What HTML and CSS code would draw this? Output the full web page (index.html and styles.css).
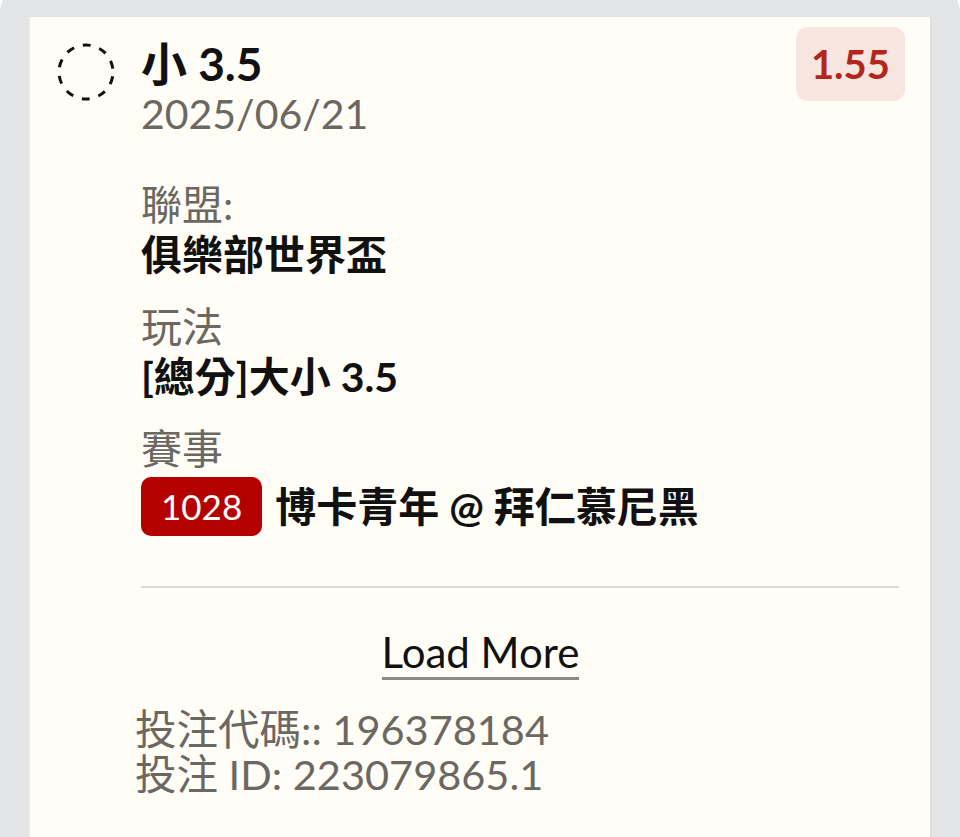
FILE: index.html
```html
<!DOCTYPE html>
<html lang="zh-Hant">
<head>
    <meta charset="UTF-8">
    <meta name="viewport" content="width=device-width, initial-scale=1.0">
    <title>投注紀錄</title>
    <link rel="stylesheet" href="styles.css">
</head>
<body>
    <div class="panel">
        <div class="card">
            <div class="bet">
                <div class="bet-icon">
                    <svg width="60" height="60" viewBox="0 0 60 60">
                        <circle cx="30" cy="30" r="27" fill="none" stroke="#111" stroke-width="3" stroke-dasharray="8 9" stroke-dashoffset="-4.5"></circle>
                    </svg>
                </div>
                <div class="bet-body">
                    <div class="bet-head">
                        <div>
                            <div class="bet-title">小 3.5</div>
                            <div class="bet-date">2025/06/21</div>
                        </div>
                        <div class="odds">1.55</div>
                    </div>

                    <div class="fields">
                        <div class="field">
                            <div class="label">聯盟:</div>
                            <div class="value">俱樂部世界盃</div>
                        </div>
                        <div class="field">
                            <div class="label">玩法</div>
                            <div class="value">[總分]大小 3.5</div>
                        </div>
                        <div class="field">
                            <div class="label">賽事</div>
                            <div class="event">
                                <span class="event-no">1028</span>
                                <span class="value">博卡青年 @ 拜仁慕尼黑</span>
                            </div>
                        </div>
                    </div>

                    <div class="divider"></div>
                </div>
            </div>

            <div class="more">
                <a class="more-link" href="#">Load More</a>
            </div>

            <div class="footer">
                <div>投注代碼:: 196378184</div>
                <div>投注 ID: 223079865.1</div>
            </div>
        </div>
    </div>
</body>
</html>
```

FILE: styles.css
```css
* { margin: 0; padding: 0; box-sizing: border-box; }
body { background: #fff; font-family: "Lato", "Noto Sans CJK TC", sans-serif; color: #111; overflow: hidden; }

.panel {
    background: #e4e5e7; border-radius: 26px 26px 0 0;
    margin-top: -14px; padding: 31px 0 0; min-height: 900px;
}
.card {
    background: #fffdf6; margin: 0 28px 0 28px; min-height: 860px;
    border-left: 2px solid #e9eae4; border-right: 2px solid #dfe0da;
    padding: 10px 25px 0 26px;
}

.bet { display: flex; }
.bet-icon { width: 60px; flex-shrink: 0; padding-top: 15px; }
.bet-icon svg { display: block; }
.bet-body { flex: 1; margin-left: 25px; }

.bet-head { display: flex; justify-content: space-between; align-items: flex-start; }
.bet-title { font-size: 46px; font-weight: 700; line-height: 50px; margin-top: 12px; }
.bet-date { font-size: 41px; line-height: 50px; color: #6b6862; }

.odds {
    background: #f6e6df; color: #b3261e; font-size: 40px; font-weight: 700;
    line-height: 52px; padding: 11px 15px; border-radius: 12px;
}

.fields { padding-top: 41px; }
.field + .field { margin-top: 22px; }
.label { font-size: 41px; line-height: 50px; color: #6b6862; }
.value { font-size: 41px; line-height: 50px; font-weight: 700; }

.event { display: flex; align-items: center; gap: 13px; margin-top: 3px; }
.event-no {
    background: #b50000; color: #fff; font-size: 35px; line-height: 42px;
    padding: 8px 20px 9px; border-radius: 10px;
}

.divider { height: 2px; background: #dcdbd6; margin: 50px 6px 0 0; }

.more { text-align: center; padding-top: 39px; }
.more-link {
    display: inline-block; color: #111; text-decoration: none;
    font-size: 42px; line-height: 1.2; border-bottom: 3px solid #8d8a85;
}

.footer { padding: 27px 0 0 79px; font-size: 41.5px; line-height: 45px; color: #6b6862; }
```
